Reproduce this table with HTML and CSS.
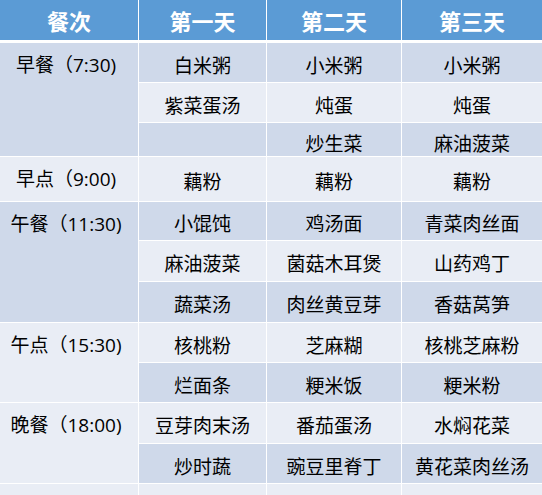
FILE: index.html
```html
<!DOCTYPE html>
<html lang="zh-CN">
<head>
<meta charset="utf-8">
<title>一周食谱</title>
<link rel="stylesheet" href="styles.css">
</head>
<body>
<div class="menu">
  <div class="head">餐次</div>
  <div class="head">第一天</div>
  <div class="head">第二天</div>
  <div class="head">第三天</div>

  <div class="label span3 dark">早餐（7:30)</div>
  <div class="cell dark">白米粥</div><div class="cell dark">小米粥</div><div class="cell dark">小米粥</div>
  <div class="cell light">紫菜蛋汤</div><div class="cell light">炖蛋</div><div class="cell light">炖蛋</div>
  <div class="cell dark low"></div><div class="cell dark low">炒生菜</div><div class="cell dark low">麻油菠菜</div>

  <div class="label light">早点（9:00)</div>
  <div class="cell light">藕粉</div><div class="cell light">藕粉</div><div class="cell light">藕粉</div>

  <div class="label span3 dark">午餐（11:30)</div>
  <div class="cell dark">小馄饨</div><div class="cell dark">鸡汤面</div><div class="cell dark">青菜肉丝面</div>
  <div class="cell light">麻油菠菜</div><div class="cell light">菌菇木耳煲</div><div class="cell light">山药鸡丁</div>
  <div class="cell dark">蔬菜汤</div><div class="cell dark">肉丝黄豆芽</div><div class="cell dark">香菇莴笋</div>

  <div class="label span2 light">午点（15:30)</div>
  <div class="cell light">核桃粉</div><div class="cell light">芝麻糊</div><div class="cell light">核桃芝麻粉</div>
  <div class="cell dark">烂面条</div><div class="cell dark">粳米饭</div><div class="cell dark">粳米粉</div>

  <div class="label span2 light">晚餐（18:00)</div>
  <div class="cell light">豆芽肉末汤</div><div class="cell light">番茄蛋汤</div><div class="cell light">水焖花菜</div>
  <div class="cell dark">炒时蔬</div><div class="cell dark">豌豆里脊丁</div><div class="cell dark">黄花菜肉丝汤</div>

  <div class="label light"></div>
  <div class="cell light"></div><div class="cell light"></div><div class="cell light"></div>
</div>
</body>
</html>
```

FILE: styles.css
```css
html, body {
  margin: 0;
  padding: 0;
  background: #ffffff;
  overflow: hidden;
}

.menu {
  display: grid;
  grid-template-columns: 138px 127px 134px 140px;
  grid-template-rows: 42px 39px 39px 33px 44px 38px 40px 40px 39px 39px 40px 39px 11px;
  gap: 1px;
  width: 542px;
  font-family: "Open Sans", "Noto Sans CJK SC", sans-serif;
  font-size: 19px;
  font-weight: 400;
  color: #000000;
}

.head {
  height: 40px;
  align-self: start;
  background: #5b9bd5;
  color: #ffffff;
  font-family: "Noto Sans CJK SC", sans-serif;
  font-weight: 700;
  font-size: 22px;
  display: flex;
  align-items: center;
  justify-content: center;
}

.cell {
  display: flex;
  align-items: center;
  justify-content: center;
  padding-top: 4px;
  box-sizing: border-box;
  white-space: nowrap;
}

.cell.low {
  align-items: flex-start;
  padding-top: 9px;
  line-height: 24px;
}

.label {
  display: flex;
  justify-content: center;
  align-items: flex-start;
  padding: 9px 6px 0 0;
  box-sizing: border-box;
  line-height: 26px;
  white-space: nowrap;
}

.span2 { grid-row: span 2; }
.span3 { grid-row: span 3; }

.dark { background: #cfd9ea; }
.light { background: #e9edf5; }
```
